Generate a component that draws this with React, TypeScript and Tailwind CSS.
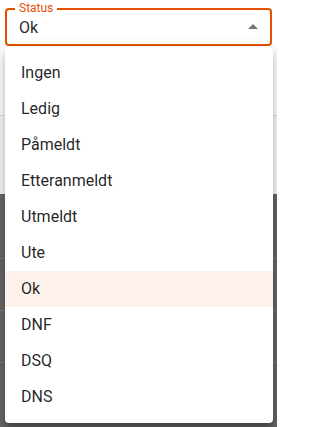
const options = ['Ingen', 'Ledig', 'Påmeldt', 'Etteranmeldt', 'Utmeldt', 'Ute', 'Ok', 'DNF', 'DSQ', 'DNS'];

export default function App() {
  return (
    <div
      className="relative w-[277px] h-[427px] overflow-hidden bg-white"
      style={{ fontFamily: 'Roboto, "Liberation Sans", sans-serif' }}
    >
      {/* page behind the menu */}
      <div className="flex flex-col h-full">
        <div className="px-[5px] pt-[8px]">
          <div className="relative h-[38px] rounded-[4px] border-2 border-[#e65100] flex items-center pl-[12px] pr-[12px]">
            <span className="absolute -top-[9px] left-[8px] px-[4px] bg-white text-[12px] leading-[14px] text-[#e65100]">
              Status
            </span>
            <span className="flex-1 text-[16px] text-black/[0.87] leading-[20px] pt-[1px]">Ok</span>
            <svg width="24" height="24" viewBox="0 0 24 24" className="fill-[#757575] mr-[-7px]">
              <path d="M7 14l5-5 5 5z" />
            </svg>
          </div>
        </div>
        <div className="h-[70px] border-b border-[#e0e0e0]" />
        <div className="h-[78px] bg-[#f9f9f9]" />
        <div className="flex-1 bg-[#666666] flex flex-col">
          <div className="h-[65px] border-b border-[#7a7a7a]" />
          <div className="h-[52px] border-b border-[#7a7a7a]" />
          <div className="h-[52px] border-b border-[#7a7a7a]" />
        </div>
      </div>

      {/* dropdown menu */}
      <div className="absolute left-[5px] top-[47px] w-[268px] rounded-[4px] bg-white py-[8px] shadow-[0_5px_5px_-3px_rgba(0,0,0,0.2),0_8px_10px_1px_rgba(0,0,0,0.14),0_3px_14px_2px_rgba(0,0,0,0.12)]">
        {options.map((o) => (
          <div
            key={o}
            className={`h-[36px] flex items-center px-[16px] text-[16px] text-black/[0.87] ${o === 'Ok' ? 'bg-[#fdf1ec]' : ''}`}
          >
            {o}
          </div>
        ))}
      </div>
    </div>
  );
}
